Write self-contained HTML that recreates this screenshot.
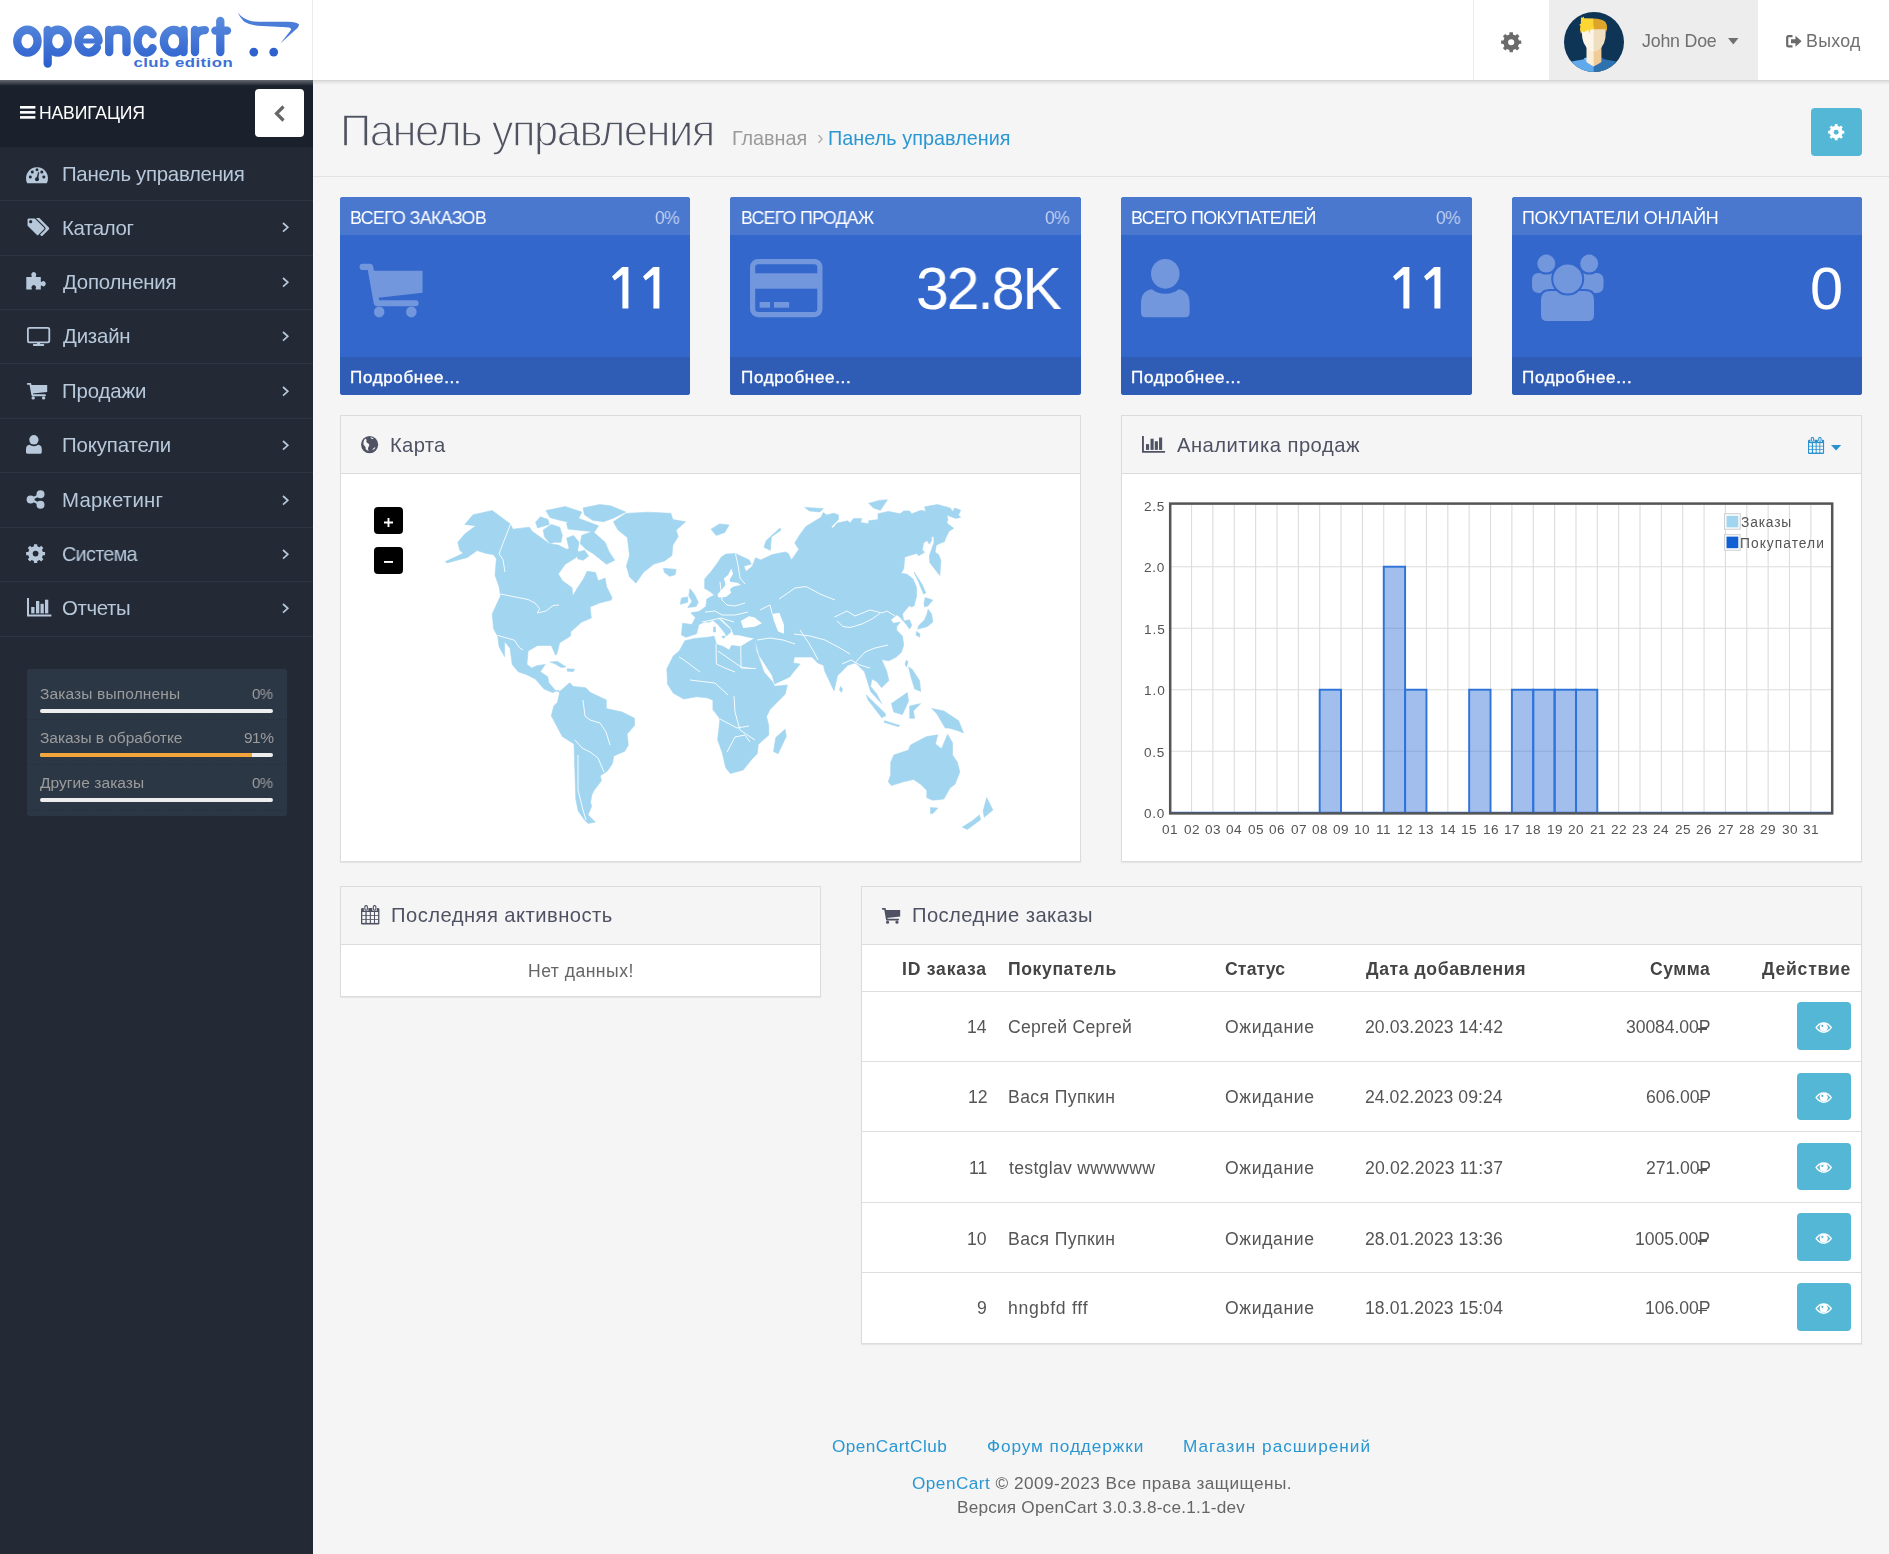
<!DOCTYPE html>
<html><head><meta charset="utf-8"><title>Панель управления</title>
<style>
html,body{margin:0;padding:0;}
body{width:1889px;height:1554px;overflow:hidden;position:relative;background:#f5f5f5;font-family:"Liberation Sans",sans-serif;}
.t{position:absolute;white-space:nowrap;font-family:"Liberation Sans",sans-serif;will-change:transform;}
svg{overflow:visible}
</style></head><body>
<div style="position:absolute;left:0px;top:0px;width:1889px;height:80px;background:#fff"></div>
<div style="position:absolute;left:312px;top:0px;width:1px;height:80px;background:#ececec"></div>
<div style="position:absolute;left:1473px;top:0px;width:1px;height:80px;background:#ececec"></div>
<div style="position:absolute;left:1549.3px;top:0px;width:208.7px;height:80px;background:#ededed"></div>
<div class="t" style="left:1642.33px;top:33.00px;font-size:17.8px;line-height:17.8px;letter-spacing:-0.194px;color:#707070;">John Doe</div>
<div class="t" style="left:1806.33px;top:33.00px;font-size:17.8px;line-height:17.8px;letter-spacing:0.267px;color:#707070;">Выход</div>
<svg style="position:absolute;left:1727.6px;top:38.1px;" width="11" height="7" viewBox="0 0 11 7"><path d="M0 0H10.5L5.25 6.6Z" fill="#707070"/></svg>
<div style="position:absolute;left:0px;top:80px;width:313px;height:1474px;background:#232a35"></div>
<div style="position:absolute;left:0px;top:80px;width:313px;height:66.7px;background:#1b212c"></div>
<div style="position:absolute;left:0px;top:80px;width:313px;height:6px;background:linear-gradient(rgba(255,255,255,0.32),rgba(255,255,255,0))"></div>
<div style="position:absolute;left:313px;top:80px;width:1576px;height:1px;background:#d6d6d6"></div>
<div style="position:absolute;left:313px;top:81px;width:1576px;height:4px;background:linear-gradient(rgba(0,0,0,0.09),rgba(0,0,0,0))"></div>
<div style="position:absolute;left:255px;top:88.6px;width:49px;height:48.4px;background:#fff;border-radius:4px"></div>
<div class="t" style="left:39.05px;top:105.00px;font-size:17.6px;line-height:17.6px;letter-spacing:-0.164px;color:#ffffff;">НАВИГАЦИЯ</div>
<div class="t" style="left:61.67px;top:164.00px;font-size:20.4px;line-height:20.4px;letter-spacing:-0.285px;color:#b7c8db;">Панель управления</div>
<div style="position:absolute;left:0px;top:200.13px;width:313px;height:1px;background:#2c3541"></div>
<div class="t" style="left:61.62px;top:218.00px;font-size:20.4px;line-height:20.4px;letter-spacing:-0.360px;color:#b7c8db;">Каталог</div>
<div style="position:absolute;left:0px;top:254.56px;width:313px;height:1px;background:#2c3541"></div>
<div class="t" style="left:63.15px;top:272.00px;font-size:20.4px;line-height:20.4px;letter-spacing:-0.221px;color:#b7c8db;">Дополнения</div>
<div style="position:absolute;left:0px;top:308.99px;width:313px;height:1px;background:#2c3541"></div>
<div class="t" style="left:63.15px;top:326.00px;font-size:20.4px;line-height:20.4px;letter-spacing:-0.183px;color:#b7c8db;">Дизайн</div>
<div style="position:absolute;left:0px;top:363.41999999999996px;width:313px;height:1px;background:#2c3541"></div>
<div class="t" style="left:61.67px;top:381.00px;font-size:20.4px;line-height:20.4px;letter-spacing:-0.127px;color:#b7c8db;">Продажи</div>
<div style="position:absolute;left:0px;top:417.84999999999997px;width:313px;height:1px;background:#2c3541"></div>
<div class="t" style="left:61.67px;top:435.00px;font-size:20.4px;line-height:20.4px;letter-spacing:-0.139px;color:#b7c8db;">Покупатели</div>
<div style="position:absolute;left:0px;top:472.28px;width:313px;height:1px;background:#2c3541"></div>
<div class="t" style="left:61.62px;top:490.00px;font-size:20.4px;line-height:20.4px;letter-spacing:0.225px;color:#b7c8db;">Маркетинг</div>
<div style="position:absolute;left:0px;top:526.71px;width:313px;height:1px;background:#2c3541"></div>
<div class="t" style="left:62.31px;top:544.00px;font-size:20.4px;line-height:20.4px;letter-spacing:-0.714px;color:#b7c8db;transform:scaleX(0.9700);transform-origin:0 0;">Система</div>
<div style="position:absolute;left:0px;top:581.14px;width:313px;height:1px;background:#2c3541"></div>
<div class="t" style="left:62.33px;top:598.00px;font-size:20.4px;line-height:20.4px;letter-spacing:-0.347px;color:#b7c8db;">Отчеты</div>
<div style="position:absolute;left:0px;top:635.5699999999999px;width:313px;height:1px;background:#2c3541"></div>
<div style="position:absolute;left:27px;top:669px;width:259.8px;height:146.6px;background:#2c3746;border-radius:3px"></div>
<div class="t" style="left:39.50px;top:686.00px;font-size:15.5px;line-height:15.5px;letter-spacing:0.139px;color:#9c9c9c;">Заказы выполнены</div>
<div class="t" style="left:252.40px;top:686.00px;font-size:15.5px;line-height:15.5px;letter-spacing:-0.543px;color:#9c9c9c;transform:scaleX(0.9665);transform-origin:0 0;">0%</div>
<div class="t" style="left:39.50px;top:730.00px;font-size:15.5px;line-height:15.5px;letter-spacing:-0.045px;color:#9c9c9c;">Заказы в обработке</div>
<div class="t" style="left:243.87px;top:730.00px;font-size:15.5px;line-height:15.5px;letter-spacing:-0.543px;color:#9c9c9c;transform:scaleX(0.9904);transform-origin:0 0;">91%</div>
<div class="t" style="left:39.88px;top:775.00px;font-size:15.5px;line-height:15.5px;letter-spacing:0.058px;color:#9c9c9c;">Другие заказы</div>
<div class="t" style="left:252.40px;top:775.00px;font-size:15.5px;line-height:15.5px;letter-spacing:-0.543px;color:#9c9c9c;transform:scaleX(0.9665);transform-origin:0 0;">0%</div>
<div style="position:absolute;left:40px;top:708.9px;width:233px;height:4px;background:#eeeeee;border-radius:2px"></div>
<div style="position:absolute;left:40px;top:753.1px;width:233px;height:4px;background:#eeeeee;border-radius:2px"></div>
<div style="position:absolute;left:40px;top:798.2px;width:233px;height:4px;background:#eeeeee;border-radius:2px"></div>
<div style="position:absolute;left:40px;top:753.1px;width:212px;height:4px;background:#f3a43b;border-radius:2px 0 0 2px"></div>
<div style="position:absolute;left:27px;top:719.3px;width:259.8px;height:1px;background:repeating-linear-gradient(90deg,rgba(0,0,0,0.2) 0 1px,transparent 1px 3px)"></div>
<div style="position:absolute;left:27px;top:764.2px;width:259.8px;height:1px;background:repeating-linear-gradient(90deg,rgba(0,0,0,0.2) 0 1px,transparent 1px 3px)"></div>
<div style="position:absolute;left:27px;top:809.7px;width:259.8px;height:1px;background:repeating-linear-gradient(90deg,rgba(0,0,0,0.2) 0 1px,transparent 1px 3px)"></div>
<div class="t" style="left:339.62px;top:110.00px;font-size:43.5px;line-height:43.5px;letter-spacing:-1.514px;color:#4f5361;-webkit-text-stroke:1.3px #f5f5f5;">Панель управления</div>
<div class="t" style="left:731.87px;top:129.00px;font-size:19.8px;line-height:19.8px;letter-spacing:-0.012px;color:#9a9a9a;">Главная</div>
<div class="t" style="left:816.86px;top:128.00px;font-size:19.8px;line-height:19.8px;letter-spacing:0.000px;color:#b0b0b0;">›</div>
<div class="t" style="left:828.42px;top:129.00px;font-size:19.8px;line-height:19.8px;letter-spacing:0.054px;color:#2a97d2;">Панель управления</div>
<div style="position:absolute;left:313px;top:176px;width:1576px;height:1px;background:#e3e3e3"></div>
<div style="position:absolute;left:1811.3px;top:108.2px;width:50.6px;height:47.5px;background:#55b7d6;border-radius:4px"></div>
<div style="position:absolute;left:339.67px;top:197px;width:350.67px;height:197.7px;border-radius:3px;overflow:hidden;background:#3467cc"><div style="position:absolute;left:0;top:0;width:100%;height:38px;background:#4a78cf"></div><div style="position:absolute;left:0;top:160px;width:100%;height:37.7px;background:#2f5cb5"></div></div>
<div class="t" style="left:349.90px;top:210.00px;font-size:17.9px;line-height:17.9px;letter-spacing:-0.627px;color:#ffffff;transform:scaleX(0.9935);transform-origin:0 0;">ВСЕГО ЗАКАЗОВ</div>
<div class="t" style="left:654.64px;top:210.00px;font-size:17.9px;line-height:17.9px;letter-spacing:-0.627px;color:#c3d1ef;transform:scaleX(0.9792);transform-origin:0 0;">0%</div>
<svg style="position:absolute;left:611.6px;top:267.4px;" width="18" height="41.4" viewBox="0 0 18 41.4"><path d="M10.2 0H16.4V41.4H10.4V7.6Q8 9.6 2.6 13.4L0 9.6Z" fill="#fff"/></svg>
<svg style="position:absolute;left:643.0px;top:267.4px;" width="18" height="41.4" viewBox="0 0 18 41.4"><path d="M10.2 0H16.4V41.4H10.4V7.6Q8 9.6 2.6 13.4L0 9.6Z" fill="#fff"/></svg>
<div class="t" style="left:350.01px;top:369.00px;font-size:17.0px;line-height:17.0px;letter-spacing:0.668px;color:#ffffff;-webkit-text-stroke:0.35px #ffffff;">Подробнее...</div>
<div style="position:absolute;left:730.34px;top:197px;width:350.67px;height:197.7px;border-radius:3px;overflow:hidden;background:#3467cc"><div style="position:absolute;left:0;top:0;width:100%;height:38px;background:#4a78cf"></div><div style="position:absolute;left:0;top:160px;width:100%;height:37.7px;background:#2f5cb5"></div></div>
<div class="t" style="left:740.59px;top:210.00px;font-size:17.9px;line-height:17.9px;letter-spacing:-0.627px;color:#ffffff;transform:scaleX(0.9842);transform-origin:0 0;">ВСЕГО ПРОДАЖ</div>
<div class="t" style="left:1045.31px;top:210.00px;font-size:17.9px;line-height:17.9px;letter-spacing:-0.627px;color:#c3d1ef;transform:scaleX(0.9792);transform-origin:0 0;">0%</div>
<div class="t" style="left:915.59px;top:259.00px;font-size:59.5px;line-height:59.5px;letter-spacing:-2.083px;color:#ffffff;transform:scaleX(0.9904);transform-origin:0 0;">32.8K</div>
<div class="t" style="left:740.68px;top:369.00px;font-size:17.0px;line-height:17.0px;letter-spacing:0.668px;color:#ffffff;-webkit-text-stroke:0.35px #ffffff;">Подробнее...</div>
<div style="position:absolute;left:1121.01px;top:197px;width:350.67px;height:197.7px;border-radius:3px;overflow:hidden;background:#3467cc"><div style="position:absolute;left:0;top:0;width:100%;height:38px;background:#4a78cf"></div><div style="position:absolute;left:0;top:160px;width:100%;height:37.7px;background:#2f5cb5"></div></div>
<div class="t" style="left:1131.23px;top:210.00px;font-size:17.9px;line-height:17.9px;letter-spacing:-0.627px;color:#ffffff;transform:scaleX(0.9997);transform-origin:0 0;">ВСЕГО ПОКУПАТЕЛЕЙ</div>
<div class="t" style="left:1435.98px;top:210.00px;font-size:17.9px;line-height:17.9px;letter-spacing:-0.627px;color:#c3d1ef;transform:scaleX(0.9792);transform-origin:0 0;">0%</div>
<svg style="position:absolute;left:1392.6px;top:267.4px;" width="18" height="41.4" viewBox="0 0 18 41.4"><path d="M10.2 0H16.4V41.4H10.4V7.6Q8 9.6 2.6 13.4L0 9.6Z" fill="#fff"/></svg>
<svg style="position:absolute;left:1424.0px;top:267.4px;" width="18" height="41.4" viewBox="0 0 18 41.4"><path d="M10.2 0H16.4V41.4H10.4V7.6Q8 9.6 2.6 13.4L0 9.6Z" fill="#fff"/></svg>
<div class="t" style="left:1131.35px;top:369.00px;font-size:17.0px;line-height:17.0px;letter-spacing:0.668px;color:#ffffff;-webkit-text-stroke:0.35px #ffffff;">Подробнее...</div>
<div style="position:absolute;left:1511.68px;top:197px;width:350.67px;height:197.7px;border-radius:3px;overflow:hidden;background:#3467cc"><div style="position:absolute;left:0;top:0;width:100%;height:38px;background:#4a78cf"></div><div style="position:absolute;left:0;top:160px;width:100%;height:37.7px;background:#2f5cb5"></div></div>
<div class="t" style="left:1521.95px;top:210.00px;font-size:17.9px;line-height:17.9px;letter-spacing:-0.260px;color:#ffffff;">ПОКУПАТЕЛИ ОНЛАЙН</div>
<div class="t" style="left:1810.32px;top:259.00px;font-size:59.5px;line-height:59.5px;letter-spacing:0.000px;color:#ffffff;">0</div>
<div class="t" style="left:1522.02px;top:369.00px;font-size:17.0px;line-height:17.0px;letter-spacing:0.668px;color:#ffffff;-webkit-text-stroke:0.35px #ffffff;">Подробнее...</div>
<div style="position:absolute;left:340.00px;top:415.00px;width:739.00px;height:445.00px;border:1px solid #dcdcdc;background:#fff;box-shadow:0 1px 1px rgba(0,0,0,0.06)"><div style="position:absolute;left:0;top:0;width:100%;height:57px;background:#f5f5f5;border-bottom:1px solid #dcdcdc"></div></div>
<div style="position:absolute;left:1121.00px;top:415.00px;width:739.00px;height:445.00px;border:1px solid #dcdcdc;background:#fff;box-shadow:0 1px 1px rgba(0,0,0,0.06)"><div style="position:absolute;left:0;top:0;width:100%;height:57px;background:#f5f5f5;border-bottom:1px solid #dcdcdc"></div></div>
<div class="t" style="left:389.63px;top:435.00px;font-size:20.2px;line-height:20.2px;letter-spacing:0.320px;color:#4e5263;">Карта</div>
<div class="t" style="left:1177.35px;top:435.00px;font-size:20.2px;line-height:20.2px;letter-spacing:0.494px;color:#4e5263;">Аналитика продаж</div>
<div style="position:absolute;left:340.00px;top:886.00px;width:479.00px;height:109.00px;border:1px solid #dcdcdc;background:#fff;box-shadow:0 1px 1px rgba(0,0,0,0.06)"><div style="position:absolute;left:0;top:0;width:100%;height:57px;background:#f5f5f5;border-bottom:1px solid #dcdcdc"></div></div>
<div class="t" style="left:390.98px;top:905.00px;font-size:20.2px;line-height:20.2px;letter-spacing:0.456px;color:#4e5263;">Последняя активность</div>
<div class="t" style="left:528.05px;top:963.00px;font-size:17.6px;line-height:17.6px;letter-spacing:0.462px;color:#666666;">Нет данных!</div>
<div style="position:absolute;left:861.00px;top:886.00px;width:999.00px;height:456.00px;border:1px solid #dcdcdc;background:#fff;box-shadow:0 1px 1px rgba(0,0,0,0.06)"><div style="position:absolute;left:0;top:0;width:100%;height:57px;background:#f5f5f5;border-bottom:1px solid #dcdcdc"></div></div>
<div class="t" style="left:911.58px;top:905.00px;font-size:20.2px;line-height:20.2px;letter-spacing:0.430px;color:#4e5263;">Последние заказы</div>
<div class="t" style="left:902.11px;top:961.00px;font-size:17.6px;line-height:17.6px;letter-spacing:0.772px;color:#444444;font-weight:bold;">ID заказа</div>
<div class="t" style="left:1008.01px;top:961.00px;font-size:17.6px;line-height:17.6px;letter-spacing:0.601px;color:#444444;font-weight:bold;">Покупатель</div>
<div class="t" style="left:1224.70px;top:961.00px;font-size:17.6px;line-height:17.6px;letter-spacing:0.155px;color:#444444;font-weight:bold;">Статус</div>
<div class="t" style="left:1365.67px;top:961.00px;font-size:17.6px;line-height:17.6px;letter-spacing:0.592px;color:#444444;font-weight:bold;">Дата добавления</div>
<div class="t" style="left:1649.50px;top:961.00px;font-size:17.6px;line-height:17.6px;letter-spacing:0.478px;color:#444444;font-weight:bold;">Сумма</div>
<div class="t" style="left:1762.17px;top:961.00px;font-size:17.6px;line-height:17.6px;letter-spacing:0.749px;color:#444444;font-weight:bold;">Действие</div>
<div style="position:absolute;left:862px;top:991px;width:999px;height:1px;background:#dddddd"></div>
<div class="t" style="left:967.25px;top:1019.00px;font-size:17.6px;line-height:17.6px;letter-spacing:-0.000px;color:#555555;">14</div>
<div class="t" style="left:1008.32px;top:1019.00px;font-size:17.6px;line-height:17.6px;letter-spacing:0.253px;color:#555555;">Сергей Сергей</div>
<div class="t" style="left:1224.56px;top:1019.00px;font-size:17.6px;line-height:17.6px;letter-spacing:0.633px;color:#555555;">Ожидание</div>
<div class="t" style="left:1365.32px;top:1019.00px;font-size:17.6px;line-height:17.6px;letter-spacing:0.063px;color:#555555;">20.03.2023 14:42</div>
<div class="t" style="left:1626.14px;top:1019.00px;font-size:17.6px;line-height:17.6px;letter-spacing:-0.082px;color:#555555;">30084.00Р</div>
<div style="position:absolute;left:1697.5px;top:1028.3000000000002px;width:9.5px;height:1.5px;background:#555555"></div>
<div style="position:absolute;left:862px;top:1061px;width:999px;height:1px;background:#dddddd"></div>
<div style="position:absolute;left:1797.2px;top:1001.9px;width:53.6px;height:47.7px;background:#55b7d6;border-radius:4px"></div>
<div class="t" style="left:967.64px;top:1089.00px;font-size:17.6px;line-height:17.6px;letter-spacing:0.000px;color:#555555;">12</div>
<div class="t" style="left:1007.75px;top:1089.00px;font-size:17.6px;line-height:17.6px;letter-spacing:0.398px;color:#555555;">Вася Пупкин</div>
<div class="t" style="left:1224.56px;top:1089.00px;font-size:17.6px;line-height:17.6px;letter-spacing:0.633px;color:#555555;">Ожидание</div>
<div class="t" style="left:1365.32px;top:1089.00px;font-size:17.6px;line-height:17.6px;letter-spacing:0.037px;color:#555555;">24.02.2023 09:24</div>
<div class="t" style="left:1645.52px;top:1089.00px;font-size:17.6px;line-height:17.6px;letter-spacing:-0.076px;color:#555555;">606.00Р</div>
<div style="position:absolute;left:1697.5px;top:1098.7px;width:9.5px;height:1.5px;background:#555555"></div>
<div style="position:absolute;left:862px;top:1131px;width:999px;height:1px;background:#dddddd"></div>
<div style="position:absolute;left:1797.2px;top:1072.6px;width:53.6px;height:47.7px;background:#55b7d6;border-radius:4px"></div>
<div class="t" style="left:968.88px;top:1160.00px;font-size:17.6px;line-height:17.6px;letter-spacing:0.000px;color:#555555;">11</div>
<div class="t" style="left:1008.94px;top:1160.00px;font-size:17.6px;line-height:17.6px;letter-spacing:0.308px;color:#555555;">testglav wwwwww</div>
<div class="t" style="left:1224.56px;top:1160.00px;font-size:17.6px;line-height:17.6px;letter-spacing:0.633px;color:#555555;">Ожидание</div>
<div class="t" style="left:1365.32px;top:1160.00px;font-size:17.6px;line-height:17.6px;letter-spacing:0.151px;color:#555555;">20.02.2023 11:37</div>
<div class="t" style="left:1645.52px;top:1160.00px;font-size:17.6px;line-height:17.6px;letter-spacing:-0.076px;color:#555555;">271.00Р</div>
<div style="position:absolute;left:1697.5px;top:1169.4px;width:9.5px;height:1.5px;background:#555555"></div>
<div style="position:absolute;left:862px;top:1202px;width:999px;height:1px;background:#dddddd"></div>
<div style="position:absolute;left:1797.2px;top:1142.5px;width:53.6px;height:47.7px;background:#55b7d6;border-radius:4px"></div>
<div class="t" style="left:967.42px;top:1231.00px;font-size:17.6px;line-height:17.6px;letter-spacing:0.000px;color:#555555;">10</div>
<div class="t" style="left:1007.75px;top:1231.00px;font-size:17.6px;line-height:17.6px;letter-spacing:0.398px;color:#555555;">Вася Пупкин</div>
<div class="t" style="left:1224.56px;top:1231.00px;font-size:17.6px;line-height:17.6px;letter-spacing:0.633px;color:#555555;">Ожидание</div>
<div class="t" style="left:1365.32px;top:1231.00px;font-size:17.6px;line-height:17.6px;letter-spacing:0.054px;color:#555555;">28.01.2023 13:36</div>
<div class="t" style="left:1635.48px;top:1231.00px;font-size:17.6px;line-height:17.6px;letter-spacing:-0.033px;color:#555555;">1005.00Р</div>
<div style="position:absolute;left:1697.5px;top:1240.4px;width:9.5px;height:1.5px;background:#555555"></div>
<div style="position:absolute;left:862px;top:1272px;width:999px;height:1px;background:#dddddd"></div>
<div style="position:absolute;left:1797.2px;top:1213px;width:53.6px;height:47.7px;background:#55b7d6;border-radius:4px"></div>
<div class="t" style="left:977.32px;top:1300.00px;font-size:17.6px;line-height:17.6px;letter-spacing:0.000px;color:#555555;">9</div>
<div class="t" style="left:1007.97px;top:1300.00px;font-size:17.6px;line-height:17.6px;letter-spacing:0.762px;color:#555555;">hngbfd fff</div>
<div class="t" style="left:1224.56px;top:1300.00px;font-size:17.6px;line-height:17.6px;letter-spacing:0.633px;color:#555555;">Ожидание</div>
<div class="t" style="left:1364.88px;top:1300.00px;font-size:17.6px;line-height:17.6px;letter-spacing:0.066px;color:#555555;">18.01.2023 15:04</div>
<div class="t" style="left:1645.08px;top:1300.00px;font-size:17.6px;line-height:17.6px;letter-spacing:-0.003px;color:#555555;">106.00Р</div>
<div style="position:absolute;left:1697.5px;top:1309.9px;width:9.5px;height:1.5px;background:#555555"></div>
<div style="position:absolute;left:1797.2px;top:1283px;width:53.6px;height:47.7px;background:#55b7d6;border-radius:4px"></div>
<div class="t" style="left:832.18px;top:1438.00px;font-size:17.2px;line-height:17.2px;letter-spacing:0.445px;color:#2a97d2;">OpenCartClub</div>
<div class="t" style="left:987.31px;top:1438.00px;font-size:17.2px;line-height:17.2px;letter-spacing:0.928px;color:#2a97d2;">Форум поддержки</div>
<div class="t" style="left:1183.38px;top:1438.00px;font-size:17.2px;line-height:17.2px;letter-spacing:1.004px;color:#2a97d2;">Магазин расширений</div>
<div class="t" style="left:911.58px;top:1475.00px;font-size:17.2px;line-height:17.2px;letter-spacing:0.472px;color:#666666;"><span style="color:#2a97d2">OpenCart</span> © 2009-2023 Все права защищены.</div>
<div class="t" style="left:956.78px;top:1499.00px;font-size:17.2px;line-height:17.2px;letter-spacing:0.216px;color:#666666;">Версия OpenCart 3.0.3.8-ce.1.1-dev</div>
<svg style="position:absolute;left:1500.1px;top:30.7px;" width="22.4" height="22.4" viewBox="0 0 22.4 22.4"><g transform="translate(11.2,11.2)"><path d="M7.75 -1.80 L10.06 -1.67 L10.06 1.67 L7.75 1.80 L6.75 4.21 L8.30 5.93 L5.93 8.30 L4.21 6.75 L1.80 7.75 L1.67 10.06 L-1.67 10.06 L-1.80 7.75 L-4.21 6.75 L-5.93 8.30 L-8.30 5.93 L-6.75 4.21 L-7.75 1.80 L-10.06 1.67 L-10.06 -1.67 L-7.75 -1.80 L-6.75 -4.21 L-8.30 -5.93 L-5.93 -8.30 L-4.21 -6.75 L-1.80 -7.75 L-1.67 -10.06 L1.67 -10.06 L1.80 -7.75 L4.21 -6.75 L5.93 -8.30 L8.30 -5.93 L6.75 -4.21Z" fill="#6b6b6b"/><circle r="7.343999999999999" fill="#6b6b6b"/><circle r="3.0599999999999996" fill="#ffffff"/></g></svg>
<svg style="position:absolute;left:1785.9px;top:35px;" width="16" height="12.5" viewBox="0 0 16 12.5"><path d="M6.5 1.2H2.6Q1.2 1.2 1.2 2.6V9.9Q1.2 11.3 2.6 11.3H6.5" fill="none" stroke="#6b6b6b" stroke-width="2.2"/><path d="M5 4.3H9.5V0.8L15.6 6.25L9.5 11.7V8.2H5Z" fill="#6b6b6b"/></svg>
<svg style="position:absolute;left:19.8px;top:106.3px;" width="15.4" height="12.7" viewBox="0 0 15.4 12.7"><rect x="0" y="0" width="15.4" height="2.6" fill="#fff"/><rect x="0" y="5.05" width="15.4" height="2.6" fill="#fff"/><rect x="0" y="10.1" width="15.4" height="2.6" fill="#fff"/></svg>
<svg style="position:absolute;left:273px;top:105px;" width="14" height="17" viewBox="0 0 14 17"><path d="M10.5 1.5L3.5 8.5L10.5 15.5" fill="none" stroke="#666" stroke-width="3.2"/></svg>
<svg style="position:absolute;left:26.2px;top:165.7px;" width="22" height="17.2" viewBox="0 0 22 17.2"><path d="M1.2 17.2A11 11 0 1 1 20.8 17.2Z" fill="#b7c8db"/><circle cx="4.3" cy="11" r="1.5" fill="#232a35"/><circle cx="6.3" cy="6" r="1.5" fill="#232a35"/><circle cx="11" cy="3.8" r="1.5" fill="#232a35"/><circle cx="15.8" cy="6" r="1.5" fill="#232a35"/><circle cx="17.8" cy="11" r="1.5" fill="#232a35"/><circle cx="11" cy="13.3" r="2.0" fill="#232a35"/><path d="M10.4 13L12.4 6.2L13 6.4L11.8 13.4Z" fill="#232a35" stroke="#232a35" stroke-width="0.5"/></svg>
<svg style="position:absolute;left:26.6px;top:218.2px;" width="23.2" height="18.4" viewBox="0 0 23.2 18.4"><path d="M0 1.6Q0 0 1.6 0H8.2L17.6 9.4Q18.6 10.4 17.6 11.4L11.6 17.4Q10.6 18.4 9.6 17.4L0 7.8Z" transform="translate(4.2 0)" fill="#b7c8db"/><path d="M0 1.6Q0 0 1.6 0H8.2L17.6 9.4Q18.6 10.4 17.6 11.4L11.6 17.4Q10.6 18.4 9.6 17.4L0 7.8Z" fill="#b7c8db" stroke="#232a35" stroke-width="1.1"/><circle cx="3.7" cy="3.7" r="1.6" fill="#232a35"/></svg>
<svg style="position:absolute;left:26px;top:270px;" width="21" height="20" viewBox="0 0 21 20"><path d="M0.3 6.9H5.2Q6 6.9 5.8 6.1A2.5 2.5 0 1 1 9.7 6.1Q9.5 6.9 10.3 6.9H14.8V11.3Q14.8 12.1 15.6 11.9A2.5 2.5 0 1 1 15.6 15.6Q14.8 15.4 14.8 16.2V19.5H10.2Q9.4 19.5 9.6 18.7A2.3 2.3 0 1 0 5.9 18.7Q6.1 19.5 5.3 19.5H0.3Z" fill="#b7c8db"/></svg>
<svg style="position:absolute;left:26.6px;top:327.1px;" width="23.2" height="19" viewBox="0 0 23.2 19"><rect x="0.9" y="0.9" width="21.4" height="14.4" rx="1.6" fill="none" stroke="#b7c8db" stroke-width="1.8"/><rect x="10.1" y="15.5" width="3" height="2" fill="#b7c8db"/><rect x="6" y="17" width="11.2" height="1.9" rx="0.6" fill="#b7c8db"/></svg>
<svg style="position:absolute;left:26.8px;top:382.9px;" width="20.2" height="16.6" viewBox="0 0 20.2 16.6"><g transform="scale(1.0000,1.0000)"><path d="M0.8 0.9H3.3L5.4 12.2H18" fill="none" stroke="#b7c8db" stroke-width="1.9" stroke-linecap="round" stroke-linejoin="round"/><path d="M3.6 2.1H20.2V8.9L5.2 10.6Z" fill="#b7c8db"/><circle cx="6.2" cy="14.9" r="1.7" fill="#b7c8db"/><circle cx="16.6" cy="14.9" r="1.7" fill="#b7c8db"/></g></svg>
<svg style="position:absolute;left:26.4px;top:435.2px;" width="15.8" height="18.7" viewBox="0 0 15.8 18.7"><g transform="scale(0.9875,1.0163)"><circle cx="8" cy="4.7" r="4.7" fill="#b7c8db"/><path d="M0 17Q0 18.4 1.4 18.4H14.6Q16 18.4 16 17V14.2Q16 10 12.4 9.6Q10.8 11 8 11Q5.2 11 3.6 9.6Q0 10 0 14.2Z" fill="#b7c8db"/></g></svg>
<svg style="position:absolute;left:26.3px;top:490px;" width="19" height="19" viewBox="0 0 19 19"><path d="M14.5 4.5L4.6 9.5L14.5 14.5" fill="none" stroke="#b7c8db" stroke-width="2.2"/><circle cx="14.5" cy="4.3" r="4" fill="#b7c8db"/><circle cx="4.6" cy="9.4" r="4" fill="#b7c8db"/><circle cx="14.5" cy="14.7" r="4" fill="#b7c8db"/></svg>
<svg style="position:absolute;left:25.1px;top:543.0px;" width="21.2" height="21.2" viewBox="0 0 21.2 21.2"><g transform="translate(10.6,10.6)"><path d="M7.29 -1.69 L9.47 -1.58 L9.47 1.58 L7.29 1.69 L6.35 3.96 L7.81 5.58 L5.58 7.81 L3.96 6.35 L1.69 7.29 L1.58 9.47 L-1.58 9.47 L-1.69 7.29 L-3.96 6.35 L-5.58 7.81 L-7.81 5.58 L-6.35 3.96 L-7.29 1.69 L-9.47 1.58 L-9.47 -1.58 L-7.29 -1.69 L-6.35 -3.96 L-7.81 -5.58 L-5.58 -7.81 L-3.96 -6.35 L-1.69 -7.29 L-1.58 -9.47 L1.58 -9.47 L1.69 -7.29 L3.96 -6.35 L5.58 -7.81 L7.81 -5.58 L6.35 -3.96Z" fill="#b7c8db"/><circle r="6.912" fill="#b7c8db"/><circle r="2.88" fill="#232a35"/></g></svg>
<svg style="position:absolute;left:26.7px;top:598px;" width="24.4" height="18.6" viewBox="0 0 24.4 18.6"><g transform="scale(1.0000,1.0000)"><path d="M1 0V17.6H24.4" fill="none" stroke="#b7c8db" stroke-width="2"/><rect x="4.2" y="9" width="3.3" height="6.4" fill="#b7c8db"/><rect x="9" y="3" width="3.3" height="12.4" fill="#b7c8db"/><rect x="13.5" y="5.8" width="3.3" height="9.6" fill="#b7c8db"/><rect x="18" y="1.7" width="3.3" height="13.7" fill="#b7c8db"/></g></svg>
<svg style="position:absolute;left:282.2px;top:222.42999999999998px;" width="7.5" height="10.6" viewBox="0 0 7.5 10.6"><path d="M1 1L5.8 5.3L1 9.6" fill="none" stroke="#b7c8db" stroke-width="1.7"/></svg>
<svg style="position:absolute;left:282.2px;top:276.86px;" width="7.5" height="10.6" viewBox="0 0 7.5 10.6"><path d="M1 1L5.8 5.3L1 9.6" fill="none" stroke="#b7c8db" stroke-width="1.7"/></svg>
<svg style="position:absolute;left:282.2px;top:331.29px;" width="7.5" height="10.6" viewBox="0 0 7.5 10.6"><path d="M1 1L5.8 5.3L1 9.6" fill="none" stroke="#b7c8db" stroke-width="1.7"/></svg>
<svg style="position:absolute;left:282.2px;top:385.71999999999997px;" width="7.5" height="10.6" viewBox="0 0 7.5 10.6"><path d="M1 1L5.8 5.3L1 9.6" fill="none" stroke="#b7c8db" stroke-width="1.7"/></svg>
<svg style="position:absolute;left:282.2px;top:440.15px;" width="7.5" height="10.6" viewBox="0 0 7.5 10.6"><path d="M1 1L5.8 5.3L1 9.6" fill="none" stroke="#b7c8db" stroke-width="1.7"/></svg>
<svg style="position:absolute;left:282.2px;top:494.58px;" width="7.5" height="10.6" viewBox="0 0 7.5 10.6"><path d="M1 1L5.8 5.3L1 9.6" fill="none" stroke="#b7c8db" stroke-width="1.7"/></svg>
<svg style="position:absolute;left:282.2px;top:549.0100000000001px;" width="7.5" height="10.6" viewBox="0 0 7.5 10.6"><path d="M1 1L5.8 5.3L1 9.6" fill="none" stroke="#b7c8db" stroke-width="1.7"/></svg>
<svg style="position:absolute;left:282.2px;top:603.44px;" width="7.5" height="10.6" viewBox="0 0 7.5 10.6"><path d="M1 1L5.8 5.3L1 9.6" fill="none" stroke="#b7c8db" stroke-width="1.7"/></svg>
<svg style="position:absolute;left:1827.3px;top:123.2px;" width="18.4" height="18.4" viewBox="0 0 18.4 18.4"><g transform="translate(9.2,9.2)"><path d="M6.23 -1.44 L8.09 -1.35 L8.09 1.35 L6.23 1.44 L5.43 3.38 L6.67 4.77 L4.77 6.67 L3.38 5.43 L1.44 6.23 L1.35 8.09 L-1.35 8.09 L-1.44 6.23 L-3.38 5.43 L-4.77 6.67 L-6.67 4.77 L-5.43 3.38 L-6.23 1.44 L-8.09 1.35 L-8.09 -1.35 L-6.23 -1.44 L-5.43 -3.38 L-6.67 -4.77 L-4.77 -6.67 L-3.38 -5.43 L-1.44 -6.23 L-1.35 -8.09 L1.35 -8.09 L1.44 -6.23 L3.38 -5.43 L4.77 -6.67 L6.67 -4.77 L5.43 -3.38Z" fill="#ffffff"/><circle r="5.903999999999999" fill="#ffffff"/><circle r="2.4599999999999995" fill="#55b7d6"/></g></svg>
<svg style="position:absolute;left:360px;top:263.6px;" width="62.5" height="53.4" viewBox="0 0 62.5 53.4"><g transform="scale(3.0941,3.2169)"><path d="M0.8 0.9H3.3L5.4 12.2H18" fill="none" stroke="#7297dd" stroke-width="1.9" stroke-linecap="round" stroke-linejoin="round"/><path d="M3.6 2.1H20.2V8.9L5.2 10.6Z" fill="#7297dd"/><circle cx="6.2" cy="14.9" r="1.7" fill="#7297dd"/><circle cx="16.6" cy="14.9" r="1.7" fill="#7297dd"/></g></svg>
<svg style="position:absolute;left:750px;top:258.8px;" width="72.5" height="58.2" viewBox="0 0 72.5 58.2"><rect x="2.6" y="2.6" width="67.3" height="53" rx="5.5" fill="none" stroke="#7297dd" stroke-width="5.2"/><rect x="4" y="14.3" width="64.5" height="15.4" fill="#7297dd"/><rect x="9.6" y="43" width="10.4" height="5.7" fill="#7297dd"/><rect x="23.9" y="43" width="15.2" height="5.7" fill="#7297dd"/></svg>
<svg style="position:absolute;left:1141px;top:258.8px;" width="48.6" height="58.2" viewBox="0 0 48.6 58.2"><g transform="scale(3.0375,3.1630)"><circle cx="8" cy="4.7" r="4.7" fill="#7297dd"/><path d="M0 17Q0 18.4 1.4 18.4H14.6Q16 18.4 16 17V14.2Q16 10 12.4 9.6Q10.8 11 8 11Q5.2 11 3.6 9.6Q0 10 0 14.2Z" fill="#7297dd"/></g></svg>
<svg style="position:absolute;left:1531px;top:253px;" width="73.5" height="69" viewBox="0 0 73.5 69"><g fill="#7297dd" stroke="#3467cc" stroke-width="2"><path d="M1 33V27Q1 20 8 20H22Q29 20 29 27V33Q29 40 22 40H8Q1 40 1 33Z" stroke="none"/><path d="M44.5 33V27Q44.5 20 51.5 20H65.5Q72.5 20 72.5 27V33Q72.5 40 65.5 40H51.5Q44.5 40 44.5 33Z" stroke="none"/><circle cx="15.3" cy="10.6" r="10"/><circle cx="58.2" cy="10.6" r="10"/><path d="M9 62V47Q9 37 19 37H54Q64 37 64 47V62Q64 69 57 69H16Q9 69 9 62Z"/><circle cx="36.7" cy="26" r="15.5"/></g></svg>
<svg style="position:absolute;left:361px;top:436px;" width="17.2" height="17.2" viewBox="0 0 17.2 17.2"><circle cx="8.6" cy="8.6" r="8.6" fill="#4e5263"/><path d="M4.2 2.4Q6 3.2 5.6 4.6Q4.8 5.6 6 6.8Q7.6 7.2 8.2 8.6Q8.6 10.4 7.2 11.2Q6.4 12.8 7.8 14.8Q5.6 14.6 4.6 12.8Q5 11 3.6 9.8Q2.2 8.8 2.4 6.4Q2.8 3.8 4.2 2.4Z" fill="#f5f5f5"/><path d="M9.4 1.2Q11.4 1.4 12.6 2.4Q11.6 3.2 10.6 2.8Q9.8 2.2 9.4 1.2Z" fill="#f5f5f5"/><path d="M10.4 14.6Q12.2 13.6 12.4 12.2Q13 11.2 14.6 11.6Q13.8 13.8 10.4 14.6Z" fill="#f5f5f5"/></svg>
<svg style="position:absolute;left:361px;top:905px;" width="18.4" height="19.6" viewBox="0 0 18.4 19.6"><g transform="scale(1.0000,1.0000)"><rect x="0" y="3.1" width="18.4" height="16.5" rx="1.3" fill="#4e5263"/><rect x="1.30" y="7.00" width="3.1" height="3.1" fill="#f5f5f5"/><rect x="5.70" y="7.00" width="3.1" height="3.1" fill="#f5f5f5"/><rect x="9.90" y="7.00" width="3.1" height="3.1" fill="#f5f5f5"/><rect x="14.00" y="7.00" width="3.1" height="3.1" fill="#f5f5f5"/><rect x="1.30" y="10.90" width="3.1" height="3.1" fill="#f5f5f5"/><rect x="5.70" y="10.90" width="3.1" height="3.1" fill="#f5f5f5"/><rect x="9.90" y="10.90" width="3.1" height="3.1" fill="#f5f5f5"/><rect x="14.00" y="10.90" width="3.1" height="3.1" fill="#f5f5f5"/><rect x="1.30" y="14.80" width="3.1" height="3.1" fill="#f5f5f5"/><rect x="5.70" y="14.80" width="3.1" height="3.1" fill="#f5f5f5"/><rect x="9.90" y="14.80" width="3.1" height="3.1" fill="#f5f5f5"/><rect x="14.00" y="14.80" width="3.1" height="3.1" fill="#f5f5f5"/><rect x="2.8" y="3.1" width="4.6" height="2.6" fill="#f5f5f5"/><rect x="3.3" y="0" width="3.6" height="5.4" rx="1.5" fill="#4e5263"/><rect x="4.4" y="1.3" width="1.4" height="3.2" fill="#f5f5f5"/><rect x="11.3" y="3.1" width="4.6" height="2.6" fill="#f5f5f5"/><rect x="11.8" y="0" width="3.6" height="5.4" rx="1.5" fill="#4e5263"/><rect x="12.9" y="1.3" width="1.4" height="3.2" fill="#f5f5f5"/></g></svg>
<svg style="position:absolute;left:882.1px;top:907.6px;" width="18.2" height="15.8" viewBox="0 0 18.2 15.8"><g transform="scale(0.9010,0.9518)"><path d="M0.8 0.9H3.3L5.4 12.2H18" fill="none" stroke="#4e5263" stroke-width="1.9" stroke-linecap="round" stroke-linejoin="round"/><path d="M3.6 2.1H20.2V8.9L5.2 10.6Z" fill="#4e5263"/><circle cx="6.2" cy="14.9" r="1.7" fill="#4e5263"/><circle cx="16.6" cy="14.9" r="1.7" fill="#4e5263"/></g></svg>
<svg style="position:absolute;left:1141.9px;top:436.2px;" width="23.1" height="16.8" viewBox="0 0 23.1 16.8"><g transform="scale(0.9467,0.9032)"><path d="M1 0V17.6H24.4" fill="none" stroke="#4e5263" stroke-width="2"/><rect x="4.2" y="9" width="3.3" height="6.4" fill="#4e5263"/><rect x="9" y="3" width="3.3" height="12.4" fill="#4e5263"/><rect x="13.5" y="5.8" width="3.3" height="9.6" fill="#4e5263"/><rect x="18" y="1.7" width="3.3" height="13.7" fill="#4e5263"/></g></svg>
<svg style="position:absolute;left:1808px;top:437.1px;" width="16.1" height="17.1" viewBox="0 0 16.1 17.1"><g transform="scale(0.8750,0.8724)"><rect x="0" y="3.1" width="18.4" height="16.5" rx="1.3" fill="#2a92cf"/><rect x="1.30" y="7.00" width="3.1" height="3.1" fill="#f5f5f5"/><rect x="5.70" y="7.00" width="3.1" height="3.1" fill="#f5f5f5"/><rect x="9.90" y="7.00" width="3.1" height="3.1" fill="#f5f5f5"/><rect x="14.00" y="7.00" width="3.1" height="3.1" fill="#f5f5f5"/><rect x="1.30" y="10.90" width="3.1" height="3.1" fill="#f5f5f5"/><rect x="5.70" y="10.90" width="3.1" height="3.1" fill="#f5f5f5"/><rect x="9.90" y="10.90" width="3.1" height="3.1" fill="#f5f5f5"/><rect x="14.00" y="10.90" width="3.1" height="3.1" fill="#f5f5f5"/><rect x="1.30" y="14.80" width="3.1" height="3.1" fill="#f5f5f5"/><rect x="5.70" y="14.80" width="3.1" height="3.1" fill="#f5f5f5"/><rect x="9.90" y="14.80" width="3.1" height="3.1" fill="#f5f5f5"/><rect x="14.00" y="14.80" width="3.1" height="3.1" fill="#f5f5f5"/><rect x="2.8" y="3.1" width="4.6" height="2.6" fill="#f5f5f5"/><rect x="3.3" y="0" width="3.6" height="5.4" rx="1.5" fill="#2a92cf"/><rect x="4.4" y="1.3" width="1.4" height="3.2" fill="#f5f5f5"/><rect x="11.3" y="3.1" width="4.6" height="2.6" fill="#f5f5f5"/><rect x="11.8" y="0" width="3.6" height="5.4" rx="1.5" fill="#2a92cf"/><rect x="12.9" y="1.3" width="1.4" height="3.2" fill="#f5f5f5"/></g></svg>
<svg style="position:absolute;left:1831px;top:444.8px;" width="10.2" height="5.6" viewBox="0 0 10.2 5.6"><path d="M0 0H10.2L5.1 5.6Z" fill="#2a92cf"/></svg>
<svg style="position:absolute;left:1815px;top:1021.6999999999999px;" width="17.4" height="11.2" viewBox="0 0 17.4 11.2"><path d="M0.2 5.6Q4 0.2 8.7 0.2Q13.4 0.2 17.2 5.6Q13.4 11 8.7 11Q4 11 0.2 5.6Z" fill="#fff"/><path d="M1.9 5.6Q4.6 2 7 1.7A4.1 4.1 0 1 0 10.4 1.7Q12.8 2 15.5 5.6Q12.8 9.3 8.7 9.3Q4.6 9.3 1.9 5.6Z" fill="#55b7d6"/><circle cx="8.7" cy="5.2" r="3.6" fill="#fff"/><circle cx="7.4" cy="3.9" r="1.1" fill="#55b7d6"/></svg>
<svg style="position:absolute;left:1815px;top:1092.4px;" width="17.4" height="11.2" viewBox="0 0 17.4 11.2"><path d="M0.2 5.6Q4 0.2 8.7 0.2Q13.4 0.2 17.2 5.6Q13.4 11 8.7 11Q4 11 0.2 5.6Z" fill="#fff"/><path d="M1.9 5.6Q4.6 2 7 1.7A4.1 4.1 0 1 0 10.4 1.7Q12.8 2 15.5 5.6Q12.8 9.3 8.7 9.3Q4.6 9.3 1.9 5.6Z" fill="#55b7d6"/><circle cx="8.7" cy="5.2" r="3.6" fill="#fff"/><circle cx="7.4" cy="3.9" r="1.1" fill="#55b7d6"/></svg>
<svg style="position:absolute;left:1815px;top:1162.3000000000002px;" width="17.4" height="11.2" viewBox="0 0 17.4 11.2"><path d="M0.2 5.6Q4 0.2 8.7 0.2Q13.4 0.2 17.2 5.6Q13.4 11 8.7 11Q4 11 0.2 5.6Z" fill="#fff"/><path d="M1.9 5.6Q4.6 2 7 1.7A4.1 4.1 0 1 0 10.4 1.7Q12.8 2 15.5 5.6Q12.8 9.3 8.7 9.3Q4.6 9.3 1.9 5.6Z" fill="#55b7d6"/><circle cx="8.7" cy="5.2" r="3.6" fill="#fff"/><circle cx="7.4" cy="3.9" r="1.1" fill="#55b7d6"/></svg>
<svg style="position:absolute;left:1815px;top:1232.8000000000002px;" width="17.4" height="11.2" viewBox="0 0 17.4 11.2"><path d="M0.2 5.6Q4 0.2 8.7 0.2Q13.4 0.2 17.2 5.6Q13.4 11 8.7 11Q4 11 0.2 5.6Z" fill="#fff"/><path d="M1.9 5.6Q4.6 2 7 1.7A4.1 4.1 0 1 0 10.4 1.7Q12.8 2 15.5 5.6Q12.8 9.3 8.7 9.3Q4.6 9.3 1.9 5.6Z" fill="#55b7d6"/><circle cx="8.7" cy="5.2" r="3.6" fill="#fff"/><circle cx="7.4" cy="3.9" r="1.1" fill="#55b7d6"/></svg>
<svg style="position:absolute;left:1815px;top:1302.8000000000002px;" width="17.4" height="11.2" viewBox="0 0 17.4 11.2"><path d="M0.2 5.6Q4 0.2 8.7 0.2Q13.4 0.2 17.2 5.6Q13.4 11 8.7 11Q4 11 0.2 5.6Z" fill="#fff"/><path d="M1.9 5.6Q4.6 2 7 1.7A4.1 4.1 0 1 0 10.4 1.7Q12.8 2 15.5 5.6Q12.8 9.3 8.7 9.3Q4.6 9.3 1.9 5.6Z" fill="#55b7d6"/><circle cx="8.7" cy="5.2" r="3.6" fill="#fff"/><circle cx="7.4" cy="3.9" r="1.1" fill="#55b7d6"/></svg>
<div style="position:absolute;left:373.8px;top:506.8px;width:29.2px;height:27.1px;background:#000;border-radius:4px"></div>
<div style="position:absolute;left:373.8px;top:546.8px;width:29.2px;height:27px;background:#000;border-radius:4px"></div>
<svg style="position:absolute;left:384px;top:518.2px;" width="9" height="9" viewBox="0 0 9 9"><path d="M4.5 0V9M0 4.5H9" stroke="#fff" stroke-width="1.9"/></svg>
<svg style="position:absolute;left:384px;top:561px;" width="9" height="2" viewBox="0 0 9 2"><rect x="0" y="0" width="9" height="1.9" fill="#fff"/></svg>
<svg style="position:absolute;left:1564px;top:12px;" width="60" height="60" viewBox="0 0 60 60"><defs><clipPath id="avc"><circle cx="30" cy="30" r="30"/></clipPath></defs><g clip-path="url(#avc)"><rect x="0" y="0" width="60" height="60" fill="#0e3556"/><path d="M0 53Q6 48.8 16 47.9Q20 47.6 23 46L30.1 55V62H0Z" fill="#60a9eb"/><path d="M60 53Q54 48.8 44 47.9Q40 47.6 37 46L29.6 55V62H60Z" fill="#2f73ae"/><path d="M19.8 46.3Q23.5 52 30.1 55.4V51.5Q25 49 22.8 45.4Z" fill="#7ec2f9"/><path d="M39.8 46.3Q36 52 29.6 55.4V51.5Q34.5 49 36.8 45.4Z" fill="#2b5fb1"/><path d="M22.5 30H30.1V54.6Q26 52.5 22.5 50Z" fill="#fcefd9"/><path d="M37.4 30H29.6V54.6Q34 52.5 37.4 50Z" fill="#efcc98"/><path d="M17.4 14H30.1V39.6Q25 39 22.5 35.5Q19 31 18.3 26Z" fill="#fdf5e7"/><path d="M42 14H29.6V39.6Q34.5 39 37.4 35.5Q40.8 31 41.4 26Z" fill="#efdfc0"/><path d="M29.4 6.5Q38 6.6 41.5 10Q43.5 12.5 43 17V20.5Q42.5 17.5 41.8 17.2H29.4Z" fill="#dea52a"/><path d="M29.7 6.5L20 6.2L19.8 4.5L18.2 5.8L17 5.2L16.8 11.8L15.3 12.5L16.4 14L16 17.5L17 22L18.5 19L19.8 20.5L24.2 17.5L25.3 22L26.6 17.6L29.7 17.2Z" fill="#fed633"/></g></svg>
<svg style="position:absolute;left:0px;top:0px;" width="312" height="80" viewBox="0 0 312 80"><defs><linearGradient id="lg" gradientUnits="userSpaceOnUse" x1="0" y1="16" x2="0" y2="68"><stop offset="0" stop-color="#5b8ddd"/><stop offset="1" stop-color="#2a5dcd"/></linearGradient></defs><g fill="none" stroke="url(#lg)" stroke-width="8.3" stroke-linecap="round" stroke-linejoin="round"><ellipse cx="27.4" cy="41.15" rx="10.15" ry="11.4"/><path d="M47.7 30V63.6"/><ellipse cx="57.9" cy="41.15" rx="9.9" ry="11.4"/><path d="M98.55 41.15A10 11.4 0 1 0 96.94 47.36"/><path d="M109.2 52V30M109.2 38Q109.2 29.75 117.85 29.75Q126.5 29.75 126.5 38V52"/><path d="M152.6 34.2A8.35 11.4 0 1 0 152.6 48.1"/><ellipse cx="173.75" cy="41.3" rx="9.9" ry="11.4"/><path d="M183.55 30V52"/><path d="M195 30V52M195 38Q196 30.05 204.9 30.05"/><path d="M220.3 20.85V52M215.35 30.6H227.05"/></g><rect x="79" y="38.5" width="19.5" height="5" fill="url(#lg)"/><text x="0" y="0" transform="translate(133.43 67.1) scale(1.331 1)" font-family="Liberation Sans" font-weight="bold" font-size="12.6" letter-spacing="0.35" fill="#3d70d6">club edition</text><path d="M237.8 12.6Q243 19.5 252 21.2Q258 22 270 21.8L288 21.7Q296.5 21.8 298.8 24.3Q299.5 25.8 297.5 28L280.3 43.5L290.6 30.4Q292 28.2 289 27.4Q287 27 282 26.9L262 26Q250 25.5 244 21.5Q240 18 237.8 12.6Z" fill="#4a7dd8"/><circle cx="253.8" cy="52.1" r="4.4" fill="#2f62cf"/><circle cx="273.7" cy="52.1" r="4.4" fill="#2f62cf"/></svg>
<svg style="position:absolute;left:0px;top:0px;pointer-events:none" width="1889" height="1554" viewBox="0 0 1889 1554"><line x1="1191.56" y1="504.5" x2="1191.56" y2="812" stroke="#dcdcdc" stroke-width="1.1"/><line x1="1212.91" y1="504.5" x2="1212.91" y2="812" stroke="#dcdcdc" stroke-width="1.1"/><line x1="1234.27" y1="504.5" x2="1234.27" y2="812" stroke="#dcdcdc" stroke-width="1.1"/><line x1="1255.62" y1="504.5" x2="1255.62" y2="812" stroke="#dcdcdc" stroke-width="1.1"/><line x1="1276.98" y1="504.5" x2="1276.98" y2="812" stroke="#dcdcdc" stroke-width="1.1"/><line x1="1298.33" y1="504.5" x2="1298.33" y2="812" stroke="#dcdcdc" stroke-width="1.1"/><line x1="1319.68" y1="504.5" x2="1319.68" y2="812" stroke="#dcdcdc" stroke-width="1.1"/><line x1="1341.04" y1="504.5" x2="1341.04" y2="812" stroke="#dcdcdc" stroke-width="1.1"/><line x1="1362.39" y1="504.5" x2="1362.39" y2="812" stroke="#dcdcdc" stroke-width="1.1"/><line x1="1383.75" y1="504.5" x2="1383.75" y2="812" stroke="#dcdcdc" stroke-width="1.1"/><line x1="1405.11" y1="504.5" x2="1405.11" y2="812" stroke="#dcdcdc" stroke-width="1.1"/><line x1="1426.46" y1="504.5" x2="1426.46" y2="812" stroke="#dcdcdc" stroke-width="1.1"/><line x1="1447.82" y1="504.5" x2="1447.82" y2="812" stroke="#dcdcdc" stroke-width="1.1"/><line x1="1469.17" y1="504.5" x2="1469.17" y2="812" stroke="#dcdcdc" stroke-width="1.1"/><line x1="1490.53" y1="504.5" x2="1490.53" y2="812" stroke="#dcdcdc" stroke-width="1.1"/><line x1="1511.88" y1="504.5" x2="1511.88" y2="812" stroke="#dcdcdc" stroke-width="1.1"/><line x1="1533.24" y1="504.5" x2="1533.24" y2="812" stroke="#dcdcdc" stroke-width="1.1"/><line x1="1554.59" y1="504.5" x2="1554.59" y2="812" stroke="#dcdcdc" stroke-width="1.1"/><line x1="1575.95" y1="504.5" x2="1575.95" y2="812" stroke="#dcdcdc" stroke-width="1.1"/><line x1="1597.30" y1="504.5" x2="1597.30" y2="812" stroke="#dcdcdc" stroke-width="1.1"/><line x1="1618.65" y1="504.5" x2="1618.65" y2="812" stroke="#dcdcdc" stroke-width="1.1"/><line x1="1640.01" y1="504.5" x2="1640.01" y2="812" stroke="#dcdcdc" stroke-width="1.1"/><line x1="1661.37" y1="504.5" x2="1661.37" y2="812" stroke="#dcdcdc" stroke-width="1.1"/><line x1="1682.72" y1="504.5" x2="1682.72" y2="812" stroke="#dcdcdc" stroke-width="1.1"/><line x1="1704.08" y1="504.5" x2="1704.08" y2="812" stroke="#dcdcdc" stroke-width="1.1"/><line x1="1725.43" y1="504.5" x2="1725.43" y2="812" stroke="#dcdcdc" stroke-width="1.1"/><line x1="1746.79" y1="504.5" x2="1746.79" y2="812" stroke="#dcdcdc" stroke-width="1.1"/><line x1="1768.14" y1="504.5" x2="1768.14" y2="812" stroke="#dcdcdc" stroke-width="1.1"/><line x1="1789.49" y1="504.5" x2="1789.49" y2="812" stroke="#dcdcdc" stroke-width="1.1"/><line x1="1810.85" y1="504.5" x2="1810.85" y2="812" stroke="#dcdcdc" stroke-width="1.1"/><line x1="1170.20" y1="751.20" x2="1832.2" y2="751.20" stroke="#dcdcdc" stroke-width="1.1"/><line x1="1170.20" y1="689.70" x2="1832.2" y2="689.70" stroke="#dcdcdc" stroke-width="1.1"/><line x1="1170.20" y1="628.20" x2="1832.2" y2="628.20" stroke="#dcdcdc" stroke-width="1.1"/><line x1="1170.20" y1="566.70" x2="1832.2" y2="566.70" stroke="#dcdcdc" stroke-width="1.1"/><line x1="1170.20" y1="812.70" x2="1191.56" y2="812.70" stroke="#2d73d9" stroke-width="1.9"/><line x1="1191.56" y1="812.70" x2="1212.91" y2="812.70" stroke="#2d73d9" stroke-width="1.9"/><line x1="1212.91" y1="812.70" x2="1234.27" y2="812.70" stroke="#2d73d9" stroke-width="1.9"/><line x1="1234.27" y1="812.70" x2="1255.62" y2="812.70" stroke="#2d73d9" stroke-width="1.9"/><line x1="1255.62" y1="812.70" x2="1276.98" y2="812.70" stroke="#2d73d9" stroke-width="1.9"/><line x1="1276.98" y1="812.70" x2="1298.33" y2="812.70" stroke="#2d73d9" stroke-width="1.9"/><line x1="1298.33" y1="812.70" x2="1319.68" y2="812.70" stroke="#2d73d9" stroke-width="1.9"/><rect x="1319.68" y="689.70" width="21.36" height="123.00" fill="rgba(30,100,210,0.42)" stroke="#2d73d9" stroke-width="1.9"/><line x1="1341.04" y1="812.70" x2="1362.39" y2="812.70" stroke="#2d73d9" stroke-width="1.9"/><line x1="1362.39" y1="812.70" x2="1383.75" y2="812.70" stroke="#2d73d9" stroke-width="1.9"/><rect x="1383.75" y="566.70" width="21.36" height="246.00" fill="rgba(30,100,210,0.42)" stroke="#2d73d9" stroke-width="1.9"/><rect x="1405.11" y="689.70" width="21.36" height="123.00" fill="rgba(30,100,210,0.42)" stroke="#2d73d9" stroke-width="1.9"/><line x1="1426.46" y1="812.70" x2="1447.82" y2="812.70" stroke="#2d73d9" stroke-width="1.9"/><line x1="1447.82" y1="812.70" x2="1469.17" y2="812.70" stroke="#2d73d9" stroke-width="1.9"/><rect x="1469.17" y="689.70" width="21.36" height="123.00" fill="rgba(30,100,210,0.42)" stroke="#2d73d9" stroke-width="1.9"/><line x1="1490.53" y1="812.70" x2="1511.88" y2="812.70" stroke="#2d73d9" stroke-width="1.9"/><rect x="1511.88" y="689.70" width="21.36" height="123.00" fill="rgba(30,100,210,0.42)" stroke="#2d73d9" stroke-width="1.9"/><rect x="1533.24" y="689.70" width="21.36" height="123.00" fill="rgba(30,100,210,0.42)" stroke="#2d73d9" stroke-width="1.9"/><rect x="1554.59" y="689.70" width="21.36" height="123.00" fill="rgba(30,100,210,0.42)" stroke="#2d73d9" stroke-width="1.9"/><rect x="1575.95" y="689.70" width="21.36" height="123.00" fill="rgba(30,100,210,0.42)" stroke="#2d73d9" stroke-width="1.9"/><line x1="1597.30" y1="812.70" x2="1618.66" y2="812.70" stroke="#2d73d9" stroke-width="1.9"/><line x1="1618.65" y1="812.70" x2="1640.01" y2="812.70" stroke="#2d73d9" stroke-width="1.9"/><line x1="1640.01" y1="812.70" x2="1661.37" y2="812.70" stroke="#2d73d9" stroke-width="1.9"/><line x1="1661.37" y1="812.70" x2="1682.72" y2="812.70" stroke="#2d73d9" stroke-width="1.9"/><line x1="1682.72" y1="812.70" x2="1704.08" y2="812.70" stroke="#2d73d9" stroke-width="1.9"/><line x1="1704.08" y1="812.70" x2="1725.43" y2="812.70" stroke="#2d73d9" stroke-width="1.9"/><line x1="1725.43" y1="812.70" x2="1746.79" y2="812.70" stroke="#2d73d9" stroke-width="1.9"/><line x1="1746.79" y1="812.70" x2="1768.14" y2="812.70" stroke="#2d73d9" stroke-width="1.9"/><line x1="1768.14" y1="812.70" x2="1789.50" y2="812.70" stroke="#2d73d9" stroke-width="1.9"/><line x1="1789.49" y1="812.70" x2="1810.85" y2="812.70" stroke="#2d73d9" stroke-width="1.9"/><line x1="1810.85" y1="812.70" x2="1832.20" y2="812.70" stroke="#2d73d9" stroke-width="1.9"/><rect x="1170.20" y="503.6" width="662.00" height="309.80" fill="none" stroke="#555555" stroke-width="2.5"/><rect x="1724.6" y="513.7" width="15.6" height="15.5" fill="#fff" stroke="#cccccc" stroke-width="1"/><rect x="1726.5" y="515.8" width="11.8" height="11.6" fill="#a1d4ef"/><rect x="1724.6" y="534.7" width="15.6" height="15.5" fill="#fff" stroke="#cccccc" stroke-width="1"/><rect x="1726.5" y="536.6" width="11.8" height="11.6" fill="#1060d4"/></svg>
<div class="t" style="left:1144.46px;top:807.00px;font-size:13.6px;line-height:13.6px;letter-spacing:0.675px;color:#545454;">0.0</div>
<div class="t" style="left:1144.46px;top:746.00px;font-size:13.6px;line-height:13.6px;letter-spacing:0.692px;color:#545454;">0.5</div>
<div class="t" style="left:1143.98px;top:684.00px;font-size:13.6px;line-height:13.6px;letter-spacing:0.913px;color:#545454;">1.0</div>
<div class="t" style="left:1143.98px;top:623.00px;font-size:13.6px;line-height:13.6px;letter-spacing:0.930px;color:#545454;">1.5</div>
<div class="t" style="left:1144.32px;top:561.00px;font-size:13.6px;line-height:13.6px;letter-spacing:0.743px;color:#545454;">2.0</div>
<div class="t" style="left:1144.32px;top:500.00px;font-size:13.6px;line-height:13.6px;letter-spacing:0.760px;color:#545454;">2.5</div>
<div class="t" style="left:1162.49px;top:823.00px;font-size:13.6px;line-height:13.6px;letter-spacing:0.417px;color:#545454;">01</div>
<div class="t" style="left:1183.87px;top:823.00px;font-size:13.6px;line-height:13.6px;letter-spacing:0.416px;color:#545454;">02</div>
<div class="t" style="left:1205.17px;top:823.00px;font-size:13.6px;line-height:13.6px;letter-spacing:0.419px;color:#545454;">03</div>
<div class="t" style="left:1226.42px;top:823.00px;font-size:13.6px;line-height:13.6px;letter-spacing:0.425px;color:#545454;">04</div>
<div class="t" style="left:1247.86px;top:823.00px;font-size:13.6px;line-height:13.6px;letter-spacing:0.420px;color:#545454;">05</div>
<div class="t" style="left:1269.23px;top:823.00px;font-size:13.6px;line-height:13.6px;letter-spacing:0.419px;color:#545454;">06</div>
<div class="t" style="left:1290.64px;top:823.00px;font-size:13.6px;line-height:13.6px;letter-spacing:0.416px;color:#545454;">07</div>
<div class="t" style="left:1311.94px;top:823.00px;font-size:13.6px;line-height:13.6px;letter-spacing:0.419px;color:#545454;">08</div>
<div class="t" style="left:1333.32px;top:823.00px;font-size:13.6px;line-height:13.6px;letter-spacing:0.418px;color:#545454;">09</div>
<div class="t" style="left:1354.39px;top:823.00px;font-size:13.6px;line-height:13.6px;letter-spacing:0.407px;color:#545454;">10</div>
<div class="t" style="left:1376.32px;top:823.00px;font-size:13.6px;line-height:13.6px;letter-spacing:0.373px;color:#545454;">11</div>
<div class="t" style="left:1397.19px;top:823.00px;font-size:13.6px;line-height:13.6px;letter-spacing:0.402px;color:#545454;">12</div>
<div class="t" style="left:1418.49px;top:823.00px;font-size:13.6px;line-height:13.6px;letter-spacing:0.405px;color:#545454;">13</div>
<div class="t" style="left:1439.74px;top:823.00px;font-size:13.6px;line-height:13.6px;letter-spacing:0.411px;color:#545454;">14</div>
<div class="t" style="left:1461.18px;top:823.00px;font-size:13.6px;line-height:13.6px;letter-spacing:0.406px;color:#545454;">15</div>
<div class="t" style="left:1482.55px;top:823.00px;font-size:13.6px;line-height:13.6px;letter-spacing:0.405px;color:#545454;">16</div>
<div class="t" style="left:1503.96px;top:823.00px;font-size:13.6px;line-height:13.6px;letter-spacing:0.402px;color:#545454;">17</div>
<div class="t" style="left:1525.26px;top:823.00px;font-size:13.6px;line-height:13.6px;letter-spacing:0.405px;color:#545454;">18</div>
<div class="t" style="left:1546.64px;top:823.00px;font-size:13.6px;line-height:13.6px;letter-spacing:0.404px;color:#545454;">19</div>
<div class="t" style="left:1568.10px;top:823.00px;font-size:13.6px;line-height:13.6px;letter-spacing:0.417px;color:#545454;">20</div>
<div class="t" style="left:1589.53px;top:823.00px;font-size:13.6px;line-height:13.6px;letter-spacing:0.413px;color:#545454;">21</div>
<div class="t" style="left:1610.90px;top:823.00px;font-size:13.6px;line-height:13.6px;letter-spacing:0.412px;color:#545454;">22</div>
<div class="t" style="left:1632.20px;top:823.00px;font-size:13.6px;line-height:13.6px;letter-spacing:0.415px;color:#545454;">23</div>
<div class="t" style="left:1653.45px;top:823.00px;font-size:13.6px;line-height:13.6px;letter-spacing:0.421px;color:#545454;">24</div>
<div class="t" style="left:1674.90px;top:823.00px;font-size:13.6px;line-height:13.6px;letter-spacing:0.416px;color:#545454;">25</div>
<div class="t" style="left:1696.27px;top:823.00px;font-size:13.6px;line-height:13.6px;letter-spacing:0.415px;color:#545454;">26</div>
<div class="t" style="left:1717.68px;top:823.00px;font-size:13.6px;line-height:13.6px;letter-spacing:0.412px;color:#545454;">27</div>
<div class="t" style="left:1738.98px;top:823.00px;font-size:13.6px;line-height:13.6px;letter-spacing:0.415px;color:#545454;">28</div>
<div class="t" style="left:1760.35px;top:823.00px;font-size:13.6px;line-height:13.6px;letter-spacing:0.414px;color:#545454;">29</div>
<div class="t" style="left:1781.74px;top:823.00px;font-size:13.6px;line-height:13.6px;letter-spacing:0.422px;color:#545454;">30</div>
<div class="t" style="left:1803.16px;top:823.00px;font-size:13.6px;line-height:13.6px;letter-spacing:0.418px;color:#545454;">31</div>
<div class="t" style="left:1740.75px;top:516.00px;font-size:13.8px;line-height:13.8px;letter-spacing:0.818px;color:#545454;">Заказы</div>
<div class="t" style="left:1740.10px;top:537.00px;font-size:13.8px;line-height:13.8px;letter-spacing:1.020px;color:#545454;">Покупатели</div>
<svg style="position:absolute;left:0px;top:0px;pointer-events:none" width="1889" height="1554" viewBox="0 0 1889 1554"><path d="M473.0 514.8 L492.2 510.6 L510.1 523.7 L512.9 529.2 L529.4 527.2 L532.1 531.3 L541.8 538.2 L549.3 543.7 L558.3 545.1 L566.6 549.2 L574.8 547.8 L578.9 551.9 L576.2 557.4 L565.2 564.3 L558.3 574.0 L562.4 580.8 L572.1 587.7 L572.7 596.0 L577.6 587.7 L583.1 579.5 L587.2 571.2 L595.5 572.6 L598.2 580.8 L605.1 578.1 L606.5 586.4 L612.0 597.4 L611.3 600.1 L599.6 602.9 L590.0 607.0 L591.3 618.0 L581.7 622.1 L570.7 631.8 L570.7 635.9 L559.7 642.8 L556.9 653.8 L555.5 655.2 L551.4 645.5 L537.6 645.5 L528.1 651.0 L526.9 664.4 L531.8 668.1 L536.7 665.7 L545.2 664.4 L540.3 671.8 L547.7 676.7 L548.9 682.8 L555.0 690.1 L559.9 692.6 L558.7 690.1 L552.6 692.6 L544.0 688.9 L535.4 679.1 L526.9 674.8 L518.3 671.8 L512.2 664.4 L510.1 648.3 L504.6 641.4 L504.6 656.6 L499.1 646.9 L497.7 635.9 L493.6 629.0 L492.2 613.9 L500.5 596.0 L499.1 586.4 L495.0 575.3 L496.4 558.8 L493.6 554.7 L485.3 553.3 L477.1 550.6 L467.4 557.4 L446.8 563.0 L445.4 561.6 L463.3 553.3 L459.9 550.6 L457.8 542.3 L464.7 534.0 L475.7 525.8 L464.7 524.4 L466.1 523.0Z" fill="#a2d5f0" stroke="#a2d5f0" stroke-width="0.6" stroke-linejoin="round"/><path d="M581.7 535.4 L592.7 531.3 L605.1 542.3 L609.2 551.9 L614.7 560.2 L606.5 564.3 L599.6 558.8 L592.7 553.3 L585.8 549.2 L580.3 543.7Z" fill="#a2d5f0" stroke="#a2d5f0" stroke-width="0.6" stroke-linejoin="round"/><path d="M566.6 538.2 L573.5 535.4 L579.0 542.3 L577.6 550.6 L569.3 549.2Z" fill="#a2d5f0" stroke="#a2d5f0" stroke-width="0.6" stroke-linejoin="round"/><path d="M576.8 552.5 L584.5 550.2 L588.6 556.1 L583.1 560.2 L577.6 558.8Z" fill="#a2d5f0" stroke="#a2d5f0" stroke-width="0.6" stroke-linejoin="round"/><path d="M535.6 522.3 L540.4 516.8 L548.0 519.6 L549.3 524.4 L537.6 527.9Z" fill="#a2d5f0" stroke="#a2d5f0" stroke-width="0.6" stroke-linejoin="round"/><path d="M543.2 529.9 L551.4 524.4 L559.7 527.2 L562.4 535.4 L561.0 542.3 L554.2 542.3 L550.0 543.7 L544.5 536.8Z" fill="#a2d5f0" stroke="#a2d5f0" stroke-width="0.6" stroke-linejoin="round"/><path d="M545.9 510.6 L565.2 506.5 L581.7 512.0 L576.2 523.4 L559.7 520.3 L550.0 517.5Z" fill="#a2d5f0" stroke="#a2d5f0" stroke-width="0.6" stroke-linejoin="round"/><path d="M566.5 522.7 L578.9 518.5 L598.6 525.8 L594.5 531.7 L578.9 530.3 L567.9 528.9Z" fill="#a2d5f0" stroke="#a2d5f0" stroke-width="0.6" stroke-linejoin="round"/><path d="M583.1 507.9 L599.6 504.5 L610.6 505.8 L625.7 512.0 L614.7 517.5 L603.7 521.7 L592.7 520.3 L584.5 514.8Z" fill="#a2d5f0" stroke="#a2d5f0" stroke-width="0.6" stroke-linejoin="round"/><path d="M613.4 521.7 L625.7 513.4 L647.5 512.2 L670.8 513.3 L672.9 519.6 L685.6 521.8 L676.1 530.2 L678.2 536.6 L672.9 545.1 L671.9 555.6 L664.5 560.9 L653.9 564.1 L643.3 572.6 L635.9 583.2 L629.5 576.8 L626.4 566.2 L629.5 555.6 L627.4 537.6 L618.0 530.0Z" fill="#a2d5f0" stroke="#a2d5f0" stroke-width="0.6" stroke-linejoin="round"/><path d="M663.4 568.3 L676.1 569.4 L675.1 574.7 L669.8 576.3 L664.5 572.6Z" fill="#a2d5f0" stroke="#a2d5f0" stroke-width="0.6" stroke-linejoin="round"/><path d="M711.0 529.2 L719.5 523.9 L729.0 524.9 L724.8 532.4 L716.3 535.5Z" fill="#a2d5f0" stroke="#a2d5f0" stroke-width="0.6" stroke-linejoin="round"/><path d="M766.1 540.8 L779.9 528.1 L781.0 530.0 L771.4 537.0 L770.3 550.3 L764.0 547.2Z" fill="#a2d5f0" stroke="#a2d5f0" stroke-width="0.6" stroke-linejoin="round"/><path d="M868.7 503.3 L879.2 500.4 L887.4 499.8 L880.4 510.3 L873.4 508.0Z" fill="#a2d5f0" stroke="#a2d5f0" stroke-width="0.6" stroke-linejoin="round"/><path d="M804.7 507.4 L823.3 508.5 L819.8 512.0 L809.3 510.9Z" fill="#a2d5f0" stroke="#a2d5f0" stroke-width="0.6" stroke-linejoin="round"/><path d="M710.0 591.6 L704.7 588.5 L704.7 578.9 L711.1 571.5 L717.4 563.1 L721.6 556.7 L725.9 554.1 L735.4 553.5 L749.2 559.9 L751.3 564.1 L743.9 566.2 L746.0 571.5 L752.3 566.2 L755.5 557.8 L760.8 559.9 L772.5 554.6 L785.2 551.9 L788.3 553.5 L791.5 559.9 L798.9 549.3 L794.7 542.9 L800.0 534.5 L805.8 526.6 L821.0 517.3 L823.3 512.6 L826.8 514.9 L833.8 513.2 L838.4 514.9 L838.4 519.6 L831.4 526.6 L832.6 528.3 L837.3 523.1 L847.8 520.8 L850.1 523.1 L853.6 518.4 L861.7 518.4 L860.6 522.5 L868.7 523.7 L868.7 520.8 L878.0 519.6 L878.0 513.8 L888.5 511.4 L900.2 513.8 L903.7 510.9 L909.5 510.9 L911.8 513.8 L921.1 510.3 L925.8 511.4 L924.6 506.8 L937.4 504.5 L950.2 508.0 L952.6 511.4 L954.9 508.0 L960.7 510.3 L958.4 514.9 L960.7 517.3 L956.1 518.4 L949.1 516.1 L946.8 514.9 L947.9 519.6 L946.8 523.1 L951.4 526.6 L953.7 528.3 L949.1 531.2 L945.6 538.2 L944.4 541.7 L940.9 542.9 L936.3 545.2 L935.1 552.2 L938.6 554.5 L940.9 560.4 L939.8 575.5 L929.9 562.7 L929.3 555.7 L933.9 542.9 L933.9 537.1 L931.6 536.5 L931.6 540.6 L929.3 544.1 L927.0 540.6 L923.5 542.9 L922.3 549.9 L924.6 552.2 L918.8 555.7 L916.5 553.4 L904.8 556.9 L903.7 568.5 L901.3 573.2 L907.2 574.3 L913.0 579.0 L916.5 587.2 L916.5 596.5 L914.1 605.8 L911.8 607.0 L909.5 605.8 L907.2 608.1 L902.5 613.9 L903.7 620.9 L909.5 619.8 L911.8 625.6 L909.5 629.1 L906.0 624.0 L899.0 616.3 L896.7 615.1 L890.8 619.8 L893.2 623.3 L900.2 622.1 L896.7 626.8 L896.7 630.2 L902.5 636.1 L903.7 645.4 L901.3 652.4 L896.2 657.1 L888.9 660.8 L881.6 659.6 L886.5 670.6 L888.9 680.4 L881.6 687.7 L876.7 681.6 L871.8 679.1 L870.6 686.5 L876.7 693.8 L881.6 703.6 L870.6 691.4 L864.5 671.8 L857.1 664.5 L855.0 662.9 L848.0 665.2 L837.5 675.7 L834.0 690.8 L824.7 671.0 L823.5 665.2 L817.7 662.9 L811.9 657.1 L794.4 657.1 L793.3 662.9 L800.2 664.1 L793.3 672.2 L789.8 676.9 L774.6 683.9 L772.3 675.7 L759.5 655.9 L757.6 649.5 L754.8 638.4 L749.0 637.3 L738.5 634.9 L733.9 634.9 L731.5 629.1 L729.0 626.0 L722.0 619.5 L717.0 617.5 L722.0 622.0 L730.0 629.0 L731.0 632.0 L728.5 634.0 L726.5 636.0 L724.0 632.0 L718.0 624.5 L712.5 620.0 L710.0 622.1 L704.7 622.1 L698.9 624.5 L696.6 633.8 L686.1 637.3 L681.4 634.9 L682.6 623.3 L691.9 624.5 L695.4 617.5 L690.8 612.8 L698.9 611.6 L705.9 606.5 L706.8 599.0 L713.2 595.6 L715.3 595.9Z" fill="#a2d5f0" stroke="#a2d5f0" stroke-width="0.6" stroke-linejoin="round"/><path d="M689.9 588.5 L694.1 593.8 L698.3 602.2 L696.2 606.5 L687.8 607.5 L692.0 601.2 L688.8 595.9Z" fill="#a2d5f0" stroke="#a2d5f0" stroke-width="0.6" stroke-linejoin="round"/><path d="M681.4 598.0 L687.8 596.9 L687.8 602.2 L680.3 604.3Z" fill="#a2d5f0" stroke="#a2d5f0" stroke-width="0.6" stroke-linejoin="round"/><path d="M684.9 640.8 L694.3 638.4 L708.2 637.3 L714.1 636.1 L716.4 644.3 L723.4 646.6 L729.2 650.1 L731.5 645.4 L740.8 646.6 L750.2 640.8 L754.8 638.4 L756.3 650.5 L764.1 672.2 L772.3 681.5 L774.6 686.2 L787.4 685.0 L785.1 694.3 L770.0 709.5 L766.5 716.5 L768.8 725.8 L768.8 735.1 L758.3 744.4 L757.2 753.7 L752.5 758.4 L743.2 770.0 L730.4 773.5 L725.7 767.7 L722.2 752.6 L717.6 739.8 L718.7 730.4 L719.9 718.8 L712.9 709.5 L712.9 700.2 L707.1 697.8 L696.6 696.7 L683.8 699.0 L673.3 693.2 L667.5 683.9 L666.9 668.7 L673.3 655.9 L679.1 651.2Z" fill="#a2d5f0" stroke="#a2d5f0" stroke-width="0.6" stroke-linejoin="round"/><path d="M785.1 729.3 L786.3 736.3 L778.1 753.7 L773.5 751.4 L775.8 737.4Z" fill="#a2d5f0" stroke="#a2d5f0" stroke-width="0.6" stroke-linejoin="round"/><path d="M559.9 691.3 L569.7 682.8 L573.3 686.4 L585.6 687.7 L590.5 692.6 L606.3 699.9 L606.3 708.5 L622.2 712.1 L634.5 718.2 L634.5 725.6 L627.1 734.1 L628.3 745.1 L624.7 751.2 L613.7 756.1 L612.5 763.5 L607.6 770.8 L600.2 775.7 L601.5 780.6 L597.8 785.5 L594.1 790.3 L591.7 795.2 L590.5 802.6 L591.7 806.2 L588.0 814.8 L595.3 822.1 L588.0 823.4 L584.3 819.7 L578.2 811.1 L575.8 798.9 L574.6 762.2 L574.0 743.9 L562.3 736.6 L551.3 715.8 L553.8 706.0 L557.5 702.3Z" fill="#a2d5f0" stroke="#a2d5f0" stroke-width="0.6" stroke-linejoin="round"/><path d="M550.1 662.0 L557.5 661.4 L566.0 666.9 L561.1 667.5 L555.0 663.8Z" fill="#a2d5f0" stroke="#a2d5f0" stroke-width="0.6" stroke-linejoin="round"/><path d="M567.2 668.7 L574.6 669.3 L573.3 671.5 L567.2 671.2Z" fill="#a2d5f0" stroke="#a2d5f0" stroke-width="0.6" stroke-linejoin="round"/><path d="M925.2 597.6 L932.8 600.0 L928.1 605.8 L924.6 607.0 L924.0 603.5Z" fill="#a2d5f0" stroke="#a2d5f0" stroke-width="0.6" stroke-linejoin="round"/><path d="M928.1 609.3 L931.6 613.9 L932.8 622.1 L927.0 626.8 L917.6 629.1 L918.8 625.6 L924.6 619.8 L927.0 613.9Z" fill="#a2d5f0" stroke="#a2d5f0" stroke-width="0.6" stroke-linejoin="round"/><path d="M916.5 631.4 L920.0 634.0 L919.5 637.2 L916.0 635.0Z" fill="#a2d5f0" stroke="#a2d5f0" stroke-width="0.6" stroke-linejoin="round"/><path d="M914.1 572.0 L922.3 584.8 L925.8 593.0 L923.5 594.1 L918.8 582.5Z" fill="#a2d5f0" stroke="#a2d5f0" stroke-width="0.6" stroke-linejoin="round"/><path d="M906.5 660.0 L908.0 662.0 L906.5 667.0 L905.0 664.0Z" fill="#a2d5f0" stroke="#a2d5f0" stroke-width="0.6" stroke-linejoin="round"/><path d="M840.5 686.5 L842.5 689.0 L841.5 692.5 L839.5 690.0Z" fill="#a2d5f0" stroke="#a2d5f0" stroke-width="0.6" stroke-linejoin="round"/><path d="M866.3 695.0 L885.2 713.4 L885.5 716.0 L881.6 717.6 L868.1 699.9Z" fill="#a2d5f0" stroke="#a2d5f0" stroke-width="0.6" stroke-linejoin="round"/><path d="M884.6 720.7 L899.9 725.6 L898.1 726.6 L884.0 722.3Z" fill="#a2d5f0" stroke="#a2d5f0" stroke-width="0.6" stroke-linejoin="round"/><path d="M891.4 703.6 L907.3 692.6 L908.5 701.1 L902.4 714.6 L893.8 712.1Z" fill="#a2d5f0" stroke="#a2d5f0" stroke-width="0.6" stroke-linejoin="round"/><path d="M909.7 706.0 L920.7 703.6 L913.4 710.9 L914.6 718.3 L909.7 718.3Z" fill="#a2d5f0" stroke="#a2d5f0" stroke-width="0.6" stroke-linejoin="round"/><path d="M908.5 666.9 L912.1 669.3 L919.5 680.4 L920.7 691.4 L914.6 688.9 L910.9 676.7Z" fill="#a2d5f0" stroke="#a2d5f0" stroke-width="0.6" stroke-linejoin="round"/><path d="M931.7 708.5 L943.9 710.9 L958.6 720.7 L963.5 732.9 L957.4 730.5 L948.8 728.0 L945.2 728.0 L936.6 713.4Z" fill="#a2d5f0" stroke="#a2d5f0" stroke-width="0.6" stroke-linejoin="round"/><path d="M893.8 755.0 L908.5 750.1 L910.3 745.2 L921.9 739.0 L926.8 736.6 L937.8 734.8 L935.4 743.9 L941.5 748.8 L947.6 734.2 L952.5 742.7 L952.5 754.9 L957.4 762.3 L959.8 772.1 L955.0 784.3 L950.0 788.0 L943.9 799.0 L932.9 800.2 L926.8 797.7 L926.8 790.4 L920.7 784.3 L913.4 779.4 L903.6 781.8 L891.4 785.5 L888.3 781.8 L890.7 774.5 L890.7 762.3Z" fill="#a2d5f0" stroke="#a2d5f0" stroke-width="0.6" stroke-linejoin="round"/><path d="M721.5 636.5 L725.5 636.0 L723.5 638.5Z" fill="#a2d5f0" stroke="#a2d5f0" stroke-width="0.6" stroke-linejoin="round"/><path d="M713.5 627.0 L715.5 627.0 L715.5 632.0 L713.5 632.0Z" fill="#a2d5f0" stroke="#a2d5f0" stroke-width="0.6" stroke-linejoin="round"/><path d="M930.5 807.5 L937.8 808.1 L932.9 813.6 L930.5 813.6Z" fill="#a2d5f0" stroke="#a2d5f0" stroke-width="0.6" stroke-linejoin="round"/><path d="M986.7 797.7 L992.9 810.0 L984.3 817.3 L983.1 811.2Z" fill="#a2d5f0" stroke="#a2d5f0" stroke-width="0.6" stroke-linejoin="round"/><path d="M979.4 814.9 L980.6 819.8 L967.2 829.5 L962.3 827.1 L972.1 821.0Z" fill="#a2d5f0" stroke="#a2d5f0" stroke-width="0.6" stroke-linejoin="round"/><path d="M731.5 568.5 L728.0 575.0 L724.0 578.5 L725.5 585.0 L721.0 590.5 L717.5 594.5 L718.5 597.5 L726.0 597.0 L731.0 593.0 L730.0 589.0 L733.5 586.5 L741.0 585.0 L737.5 582.8 L730.5 582.0 L729.5 580.0 L733.0 574.0Z" fill="#ffffff"/><path d="M740.8 621.0 L749.0 616.3 L754.8 617.5 L761.8 623.3 L754.8 626.8 L743.2 628.0Z" fill="#ffffff"/><path d="M772.3 614.0 L779.3 612.8 L783.9 624.5 L783.9 633.8 L778.1 631.4 L773.5 619.8Z" fill="#ffffff"/><path d="M510.5 524.0 L499.0 553.8 L503.0 559.7 L505.0 572.0" fill="none" stroke="#ffffff" stroke-width="0.9" stroke-linejoin="round"/><path d="M500.3 594.0 L528.0 599.5 L535.0 603.0 L539.5 608.6 L537.5 613.0 L546.0 611.0 L553.0 605.5 L559.0 605.0" fill="none" stroke="#ffffff" stroke-width="0.9" stroke-linejoin="round"/><path d="M497.7 635.4 L508.0 638.4 L514.4 640.2 L519.2 647.5 L523.0 650.0" fill="none" stroke="#ffffff" stroke-width="0.9" stroke-linejoin="round"/><path d="M718.0 651.0 L741.0 667.0 L752.0 668.6" fill="none" stroke="#ffffff" stroke-width="0.9" stroke-linejoin="round"/><path d="M740.8 646.6 L741.0 668.0 L756.0 668.5" fill="none" stroke="#ffffff" stroke-width="0.9" stroke-linejoin="round"/><path d="M716.0 644.0 L716.4 664.0 L725.0 668.0 L735.0 672.0" fill="none" stroke="#ffffff" stroke-width="0.9" stroke-linejoin="round"/><path d="M679.0 657.0 L684.0 660.0 L700.0 672.0" fill="none" stroke="#ffffff" stroke-width="0.9" stroke-linejoin="round"/><path d="M690.0 680.0 L715.0 683.0 L728.0 695.0" fill="none" stroke="#ffffff" stroke-width="0.9" stroke-linejoin="round"/><path d="M734.0 696.0 L735.0 712.0 L740.0 730.0 L755.0 740.0" fill="none" stroke="#ffffff" stroke-width="0.9" stroke-linejoin="round"/><path d="M720.0 719.0 L737.0 728.0 L749.0 726.0" fill="none" stroke="#ffffff" stroke-width="0.9" stroke-linejoin="round"/><path d="M727.0 752.0 L735.0 737.0 L745.0 735.0 L750.0 742.0" fill="none" stroke="#ffffff" stroke-width="0.9" stroke-linejoin="round"/><path d="M834.5 617.0 L847.0 611.0 L855.0 616.0 L870.0 610.0 L882.0 613.0 L887.0 611.0 L895.0 616.0" fill="none" stroke="#ffffff" stroke-width="0.9" stroke-linejoin="round"/><path d="M837.0 621.0 L843.0 626.5 L850.0 627.5 L862.0 624.0 L872.0 619.0 L880.0 613.3" fill="none" stroke="#ffffff" stroke-width="0.9" stroke-linejoin="round"/><path d="M779.0 599.0 L795.0 588.0 L806.0 586.5 L820.0 594.0 L835.0 600.0" fill="none" stroke="#ffffff" stroke-width="0.9" stroke-linejoin="round"/><path d="M842.0 664.0 L851.0 660.0 L860.0 665.0 L870.0 668.0" fill="none" stroke="#ffffff" stroke-width="0.9" stroke-linejoin="round"/><path d="M855.0 662.9 L865.0 652.0 L875.0 648.0 L888.0 645.0" fill="none" stroke="#ffffff" stroke-width="0.9" stroke-linejoin="round"/><path d="M800.0 630.0 L808.0 642.0 L814.0 652.0 L818.0 660.0" fill="none" stroke="#ffffff" stroke-width="0.9" stroke-linejoin="round"/><path d="M794.0 634.0 L810.0 636.0 L825.0 640.0 L840.0 648.0 L850.0 654.0" fill="none" stroke="#ffffff" stroke-width="0.9" stroke-linejoin="round"/><path d="M760.0 610.0 L770.0 605.0 L772.3 614.0" fill="none" stroke="#ffffff" stroke-width="0.9" stroke-linejoin="round"/><path d="M757.0 640.0 L770.0 638.0 L783.0 640.0 L795.0 644.0" fill="none" stroke="#ffffff" stroke-width="0.9" stroke-linejoin="round"/><path d="M583.0 700.0 L585.0 716.0 L590.0 720.0 L600.0 723.0 L606.0 732.0 L610.0 745.0" fill="none" stroke="#ffffff" stroke-width="0.9" stroke-linejoin="round"/><path d="M575.0 740.0 L582.0 748.0 L590.0 752.0 L598.0 758.0 L604.0 772.0" fill="none" stroke="#ffffff" stroke-width="0.9" stroke-linejoin="round"/><path d="M578.0 755.0 L578.0 790.0 L583.0 810.0 L586.0 820.0" fill="none" stroke="#ffffff" stroke-width="0.9" stroke-linejoin="round"/><path d="M720.0 582.0 L722.0 600.0 L727.0 605.0 L735.0 606.0 L745.0 603.0" fill="none" stroke="#ffffff" stroke-width="0.9" stroke-linejoin="round"/><path d="M705.0 612.0 L715.0 611.0 L722.0 615.0 L735.0 615.0 L748.0 612.0" fill="none" stroke="#ffffff" stroke-width="0.9" stroke-linejoin="round"/><path d="M702.0 622.0 L712.0 620.0 L721.0 618.0 L734.0 622.0" fill="none" stroke="#ffffff" stroke-width="0.9" stroke-linejoin="round"/><path d="M735.4 553.5 L738.0 565.0 L740.0 578.0 L745.0 584.0" fill="none" stroke="#ffffff" stroke-width="0.9" stroke-linejoin="round"/></svg>
</body></html>
